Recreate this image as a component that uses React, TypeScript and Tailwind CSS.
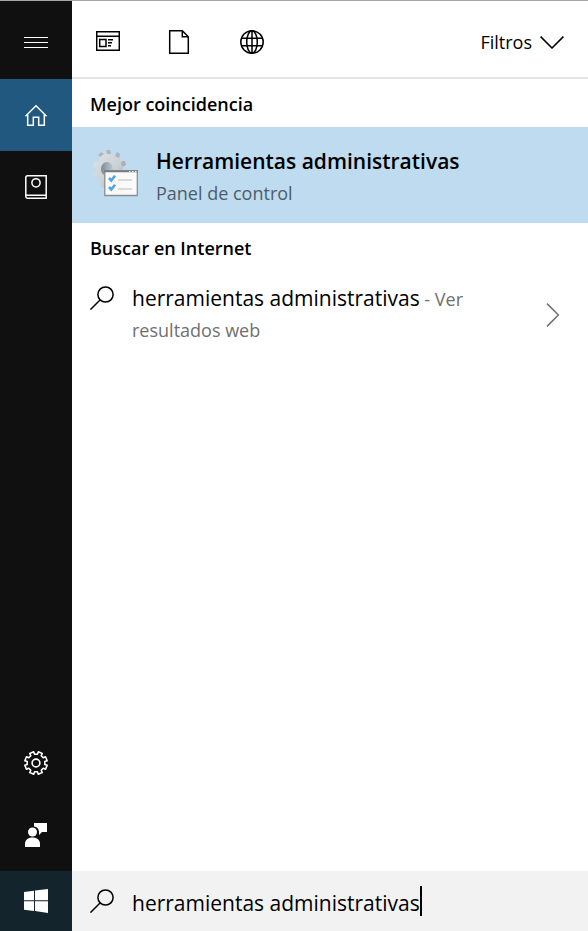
import { useState } from "react";
import type { ReactNode } from "react";

function SideButton({ label, active = false, children }: { label: string; active?: boolean; children: ReactNode }) {
  return (
    <button
      type="button"
      aria-label={label}
      className={`flex h-[72px] w-full items-center justify-center text-white ${active ? "bg-[#20587f]" : ""}`}
    >
      {children}
    </button>
  );
}

function SectionTitle({ children }: { children: ReactNode }) {
  return <h2 className="flex h-12 items-center px-[18px] pt-0.5 text-[18px] font-semibold">{children}</h2>;
}

function SearchIcon() {
  return (
    <svg width="24" height="24" viewBox="0 0 24 24" fill="none" stroke="currentColor" strokeWidth="1.5" className="shrink-0" aria-hidden="true">
      <circle cx="15.5" cy="8.5" r="7.6" />
      <path d="M10 14 L0.4 23.6" />
    </svg>
  );
}

function AppsIcon() {
  return (
    <svg width="24" height="24" viewBox="0 -1 24 24" fill="none" stroke="currentColor" strokeWidth="1.5" aria-hidden="true">
      <path d="M.7 .7H23.3V19.3H.7ZM.7 5.3H23.3" />
      <path d="M3.7 8.5H10V15.5H3.7Z" />
      <path d="M12 8.7H17M12 11.7H16M12 14.7H15" />
    </svg>
  );
}

function DocumentIcon() {
  return (
    <svg width="24" height="24" viewBox="-1 0 24 24" fill="none" stroke="currentColor" strokeWidth="1.5" aria-hidden="true">
      <path d="M.7 .7H13.3L19.3 6.7V23.3H.7ZM13.3 .7V6.7H19.3" />
    </svg>
  );
}

function GlobeIcon() {
  return (
    <svg width="24" height="24" viewBox="0 0 24 24" fill="none" stroke="currentColor" strokeWidth="1.5" aria-hidden="true">
      <circle cx="12" cy="12" r="11.2" />
      <ellipse cx="12" cy="12" rx="5.3" ry="11.2" />
      <path d="M12 .7V23.3M1.4 8.3H22.6M1.4 15.7H22.6" />
    </svg>
  );
}

function gearPath(c: number, outer: number, inner: number, teeth: number) {
  const step = (Math.PI * 2) / teeth;
  const points: string[] = [];
  for (let i = 0; i < teeth; i++) {
    const a = i * step - Math.PI / 2 + step / 2;
    const corners: [number, number][] = [
      [-0.3, inner],
      [-0.24, outer],
      [0.24, outer],
      [0.3, inner],
    ];
    for (const [f, r] of corners) {
      points.push(`${(c + r * Math.cos(a + f * step)).toFixed(2)} ${(c + r * Math.sin(a + f * step)).toFixed(2)}`);
    }
  }
  return `M${points.join("L")}Z`;
}

function SettingsIcon() {
  return (
    <svg width="24" height="24" viewBox="0 0 24 24" fill="none" stroke="currentColor" strokeWidth="1.6" strokeLinejoin="round" aria-hidden="true">
      <path d={gearPath(12, 11.4, 8.9, 8)} />
      <circle cx="12" cy="12" r="3.9" />
    </svg>
  );
}

function AdminToolsIcon() {
  return (
    <svg width="48" height="48" viewBox="0 0 48 48" aria-hidden="true" className="shrink-0">
      <defs>
        <linearGradient id="metal" x1="0" y1="0" x2="1" y2="1">
          <stop offset="0" stopColor="#dfe4e8" />
          <stop offset="0.55" stopColor="#cbd1d5" />
          <stop offset="1" stopColor="#a9b0b6" />
        </linearGradient>
        <linearGradient id="bore" x1="0" y1="0" x2="1" y2="0">
          <stop offset="0" stopColor="#7e8991" />
          <stop offset="1" stopColor="#b9cbd8" />
        </linearGradient>
      </defs>
      <path
        d="M13 5L14 1 18 1 19 5 22 6 25 3 28 5 27 9 29 12 33 12 34 16 31 18 31 22 34 24 32 28 28 28 25 32 25 36 21 38 18 35 14 36 11 39 8 36 9 32 6 29 2 29 1 25 4 22 4 19 1 17 2 13 6 13 8 10 6 6 9 3Z"
        fill="url(#metal)"
      />
      <path d="M25 3l3 2-1 4-4-2ZM30 12h3l1 4-3 2-2-3ZM14 1h4l1 4h-4ZM6 6l3-3 3 2-4 3Z" fill="#9ea7ad" opacity=".7" />
      <ellipse cx="15" cy="20" rx="6" ry="7" fill="url(#bore)" />
      <path d="M12.8 22H45.3V46.5H12.8Z" fill="#fafafa" stroke="#8a8e91" strokeWidth="1.3" />
      <path d="M12 21.3H46V23.3H12Z" fill="#777d81" />
      <path d="M37 22.5h1.5M40 22.5h1.5M43 22.5h1.5" stroke="#eee" />
      <path d="M26 31H40M26 40H40" stroke="#d0d0d0" strokeWidth="1.4" />
      <path d="M17 29L19.3 31.5 23 26.8M17 38L19.3 40.5 23 35.8" fill="none" stroke="#52a5e5" strokeWidth="2.6" />
    </svg>
  );
}

export default function App() {
  const [query, setQuery] = useState("herramientas administrativas");

  return (
    <div className="flex min-h-screen flex-col border-t border-[#a6a6a6] bg-white font-['Open_Sans','Noto_Sans',sans-serif] text-black">
      <div className="flex grow">
        <nav aria-label="Menú" className="flex w-[72px] shrink-0 flex-col bg-[#101010]">
          <button type="button" aria-label="Expandir" className="flex h-[78px] items-center justify-center pt-1 text-white">
            <svg width="24" height="11" viewBox="0 0 24 11" fill="currentColor" shapeRendering="crispEdges" aria-hidden="true">
              <path d="M0 0H24V1H0ZM0 5H24V6H0ZM0 10H24V11H0Z" />
            </svg>
          </button>
          <SideButton label="Inicio" active>
            <svg width="24" height="22" viewBox="0 0 24 22" fill="none" stroke="currentColor" strokeWidth="1.5" aria-hidden="true">
              <path d="M1.5 12.3L12 1.8 22.5 12.3" />
              <path d="M3.7 10.5V21.2H9.3V13.2H14.7V21.2H20.3V10.5" />
            </svg>
          </SideButton>
          <SideButton label="Cuaderno">
            <svg width="22" height="24" viewBox="0 0 22 24" fill="none" stroke="currentColor" strokeWidth="1.5" aria-hidden="true">
              <path d="M21.2 .8H2.5Q.8 .8 .8 2.8V21.5Q.8 23.2 2.5 23.2H21.2ZM1 20.2H21.2" />
              <circle cx="11" cy="7.8" r="4.1" />
            </svg>
          </SideButton>
          <div className="mt-auto">
            <SideButton label="Configuración">
              <SettingsIcon />
            </SideButton>
            <SideButton label="Comentarios">
              <svg width="24" height="24" viewBox="0 0 24 24" fill="currentColor" aria-hidden="true">
                <path d="M10 0H23V9H18L15 12V8.5A6 6 0 0 0 10 3.5Z" />
                <circle cx="8.5" cy="9" r="4.5" />
                <path d="M1 24V21C1 17 4 14.5 8.5 14.5S16 17 16 21V24Z" />
              </svg>
            </SideButton>
          </div>
        </nav>

        <main className="min-w-0 grow">
          <header className="flex h-[78px] items-center justify-between border-b-2 border-[#e4e4e4] px-6 pt-1.5">
            <div className="flex items-center gap-12">
              <button type="button" aria-label="Aplicaciones">
                <AppsIcon />
              </button>
              <button type="button" aria-label="Documentos">
                <DocumentIcon />
              </button>
              <button type="button" aria-label="Web">
                <GlobeIcon />
              </button>
            </div>
            <button type="button" className="flex items-center gap-2 text-[18px] leading-6">
              Filtros
              <svg width="24" height="13" viewBox="0 0 24 13" fill="none" stroke="currentColor" strokeWidth="1.5" aria-hidden="true">
                <path d="M.6 .6L12 12 23.4 .6" />
              </svg>
            </button>
          </header>

          <section>
            <SectionTitle>Mejor coincidencia</SectionTitle>
            <button type="button" className="flex h-24 w-full items-center gap-4 bg-[#bfdbef] px-5 text-left">
              <span className="pb-1">
                <AdminToolsIcon />
              </span>
              <span className="flex flex-col gap-1 pt-1">
                <span className="text-[21px] leading-7 font-semibold">Herramientas administrativas</span>
                <span className="text-[18px] leading-7 text-[#4e5d68]">Panel de control</span>
              </span>
            </button>
          </section>

          <section>
            <SectionTitle>Buscar en Internet</SectionTitle>
            <button type="button" className="flex w-full items-center px-[18px] pt-3 pb-1.5 text-left">
              <span className="flex grow items-start gap-[18px]">
                <span className="pt-[3px]">
                  <SearchIcon />
                </span>
                <span className="max-w-[360px] text-[18px] leading-[31px]">
                  <span className="text-[21px]">{query}</span>
                  <span className="text-[#707070]"> - Ver resultados web</span>
                </span>
              </span>
              <svg width="24" height="24" viewBox="0 0 24 24" fill="none" stroke="#707070" strokeWidth="1.5" aria-hidden="true">
                <path d="M1 .6L12.4 12 1 23.4" />
              </svg>
            </button>
          </section>
        </main>
      </div>

      <footer className="flex h-[60px] shrink-0">
        <button type="button" aria-label="Windows" className="flex w-[72px] items-center justify-center bg-[#14242c] text-white">
          <svg width="24" height="24" viewBox="0 0 24 24" fill="currentColor" aria-hidden="true">
            <path d="M0 3L10 1.8V11.3H0ZM11 1.6L24 0V11.3H11ZM0 12.3H10V21.9L0 20.7ZM11 12.3H24V24L11 22.1Z" />
          </svg>
        </button>
        <label className="flex grow items-center bg-[#f2f2f2] px-[18px]">
          <SearchIcon />
          <input
            type="text"
            aria-label="Buscar"
            value={query}
            onChange={(event) => setQuery(event.target.value)}
            className="ml-[18px] field-sizing-content h-9 bg-transparent pt-1 text-[21px] caret-transparent outline-none"
          />
          <span aria-hidden="true" className="h-[30px] w-[2px] bg-black" />
        </label>
      </footer>
    </div>
  );
}
